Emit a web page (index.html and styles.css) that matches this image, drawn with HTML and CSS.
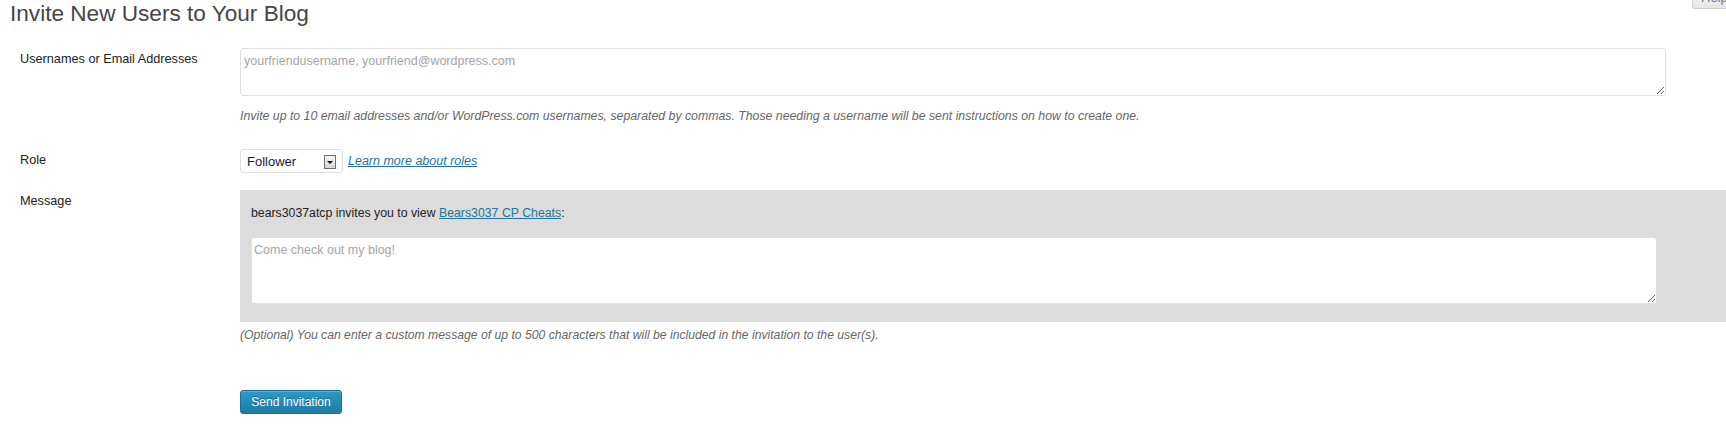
FILE: index.html
```html
<!DOCTYPE html>
<html lang="en">
<head>
<meta charset="utf-8">
<title>Invite New Users to Your Blog</title>
<link rel="stylesheet" href="styles.css">
</head>
<body>
<div class="help-tab">Help</div>
<div class="wrap">
  <h2 class="title">Invite New Users to Your Blog</h2>
  <form class="invite-form">
    <div class="row row-users">
      <div class="label">Usernames or Email Addresses</div>
      <div class="field">
        <textarea class="input users" placeholder="yourfriendusername, yourfriend@wordpress.com"></textarea>
        <p class="desc desc-users">Invite up to 10 email addresses and/or WordPress.com usernames, separated by commas. Those needing a username will be sent instructions on how to create one.</p>
      </div>
    </div>
    <div class="row row-role">
      <div class="label">Role</div>
      <div class="field field-inline">
        <div class="select-wrap">
          <select class="select"><option>Follower</option></select>
          <span class="select-arrow"></span>
        </div>
        <a class="roles-link" href="#">Learn more about roles</a>
      </div>
    </div>
    <div class="row row-message">
      <div class="label">Message</div>
      <div class="field field-message">
        <div class="message-box">
          <p class="invite-line">bears3037atcp invites you to view <a class="blog-link" href="#">Bears3037 CP Cheats</a>:</p>
          <textarea class="input message" placeholder="Come check out my blog!"></textarea>
        </div>
        <p class="desc desc-message">(Optional) You can enter a custom message of up to 500 characters that will be included in the invitation to the user(s).</p>
      </div>
    </div>
    <div class="submit-row">
      <button type="button" class="button-primary">Send Invitation</button>
    </div>
  </form>
</div>
</body>
</html>
```

FILE: styles.css
```css
html, body {
  margin: 0;
  padding: 0;
  background: #ffffff;
  overflow: hidden;
}

body {
  font-family: "Liberation Sans", Arial, sans-serif;
  font-size: 12.5px;
  color: #222222;
}

.help-tab {
  position: absolute;
  top: -12px;
  left: 1692px;
  width: 50px;
  height: 21px;
  box-sizing: border-box;
  border: 1px solid #cfcfcf;
  border-top: none;
  border-radius: 0 0 3px 3px;
  background: linear-gradient(#f7f7f7, #e6e6e6);
  color: #777777;
  font-size: 13px;
  line-height: 19px;
  padding-left: 8px;
}

.wrap {
  padding-left: 10px;
}

.title {
  margin: 0;
  font-size: 22.6px;
  line-height: 27px;
  font-weight: normal;
  color: #464646;
}

.invite-form {
  margin-top: 13px;
}

.row {
  display: flex;
  align-items: flex-start;
}

.label {
  width: 220px;
  padding: 10px 0 0 10px;
  font-size: 12.7px;
  line-height: 18px;
  color: #222222;
}

.field {
  padding-top: 8px;
  flex: 1;
}

.row-users {
  padding-bottom: 16px;
}

.row-role {
  padding-bottom: 9px;
}

.input {
  display: block;
  box-sizing: border-box;
  margin: 0;
  border: 1px solid #dfdfdf;
  border-radius: 3px;
  background: #ffffff;
  font-family: "Liberation Sans", Arial, sans-serif;
  font-size: 12.5px;
  line-height: 18px;
  padding: 3px 3px;
  color: #333333;
  resize: both;
}

.input::placeholder {
  color: #a5a5a5;
}

.users {
  width: 1426px;
  height: 48px;
}

.desc {
  margin: 0;
  font-style: italic;
  color: #666666;
  font-size: 12.3px;
  line-height: 17px;
}

.desc-users {
  margin-top: 12px;
}

.field-inline {
  display: flex;
  align-items: center;
  gap: 5px;
}

.select-wrap {
  position: relative;
  width: 103px;
  height: 24px;
}

.select {
  appearance: none;
  -webkit-appearance: none;
  box-sizing: border-box;
  width: 103px;
  height: 24px;
  margin: 0;
  border: 1px solid #dfdfdf;
  border-radius: 3px;
  background: #ffffff;
  padding: 0 0 0 6px;
  font-family: "Liberation Sans", Arial, sans-serif;
  font-size: 13px;
  color: #1a1a2e;
}

.select-arrow {
  position: absolute;
  top: 6px;
  right: 7px;
  width: 12px;
  height: 14px;
  box-sizing: border-box;
  border: 1px solid #6f6f6f;
  background: linear-gradient(#f4f4f4, #d6d6d6);
  pointer-events: none;
}

.select-arrow::after {
  content: "";
  position: absolute;
  left: 2px;
  top: 5px;
  border-left: 3px solid transparent;
  border-right: 3px solid transparent;
  border-top: 3px solid #111111;
}

.roles-link {
  color: #21759b;
  font-style: italic;
  font-size: 12.5px;
  text-decoration: underline;
}

.message-box {
  background: #dcdcdc;
  padding: 15px 0 18px 11px;
}

.invite-line {
  margin: 0 0 15px 0;
  font-size: 12.3px;
  line-height: 17px;
  color: #222222;
}

.blog-link {
  color: #21759b;
  text-decoration: underline;
}

.message {
  width: 1406px;
  height: 67px;
  padding: 3px 2px;
}

.desc-message {
  margin-top: 5px;
  font-size: 12.2px;
}

.submit-row {
  padding: 46px 0 0 230px;
}

.button-primary {
  display: block;
  box-sizing: border-box;
  height: 24px;
  width: 102px;
  padding: 0;
  border: 1px solid #1f6d93;
  border-radius: 3px;
  background: linear-gradient(#2d99c9, #1f7ba5);
  box-shadow: inset 0 1px 0 rgba(120, 200, 230, 0.5);
  color: #ffffff;
  font-family: "Liberation Sans", Arial, sans-serif;
  font-size: 12px;
  text-shadow: 0 -1px 0 rgba(0, 0, 0, 0.3);
}
```
